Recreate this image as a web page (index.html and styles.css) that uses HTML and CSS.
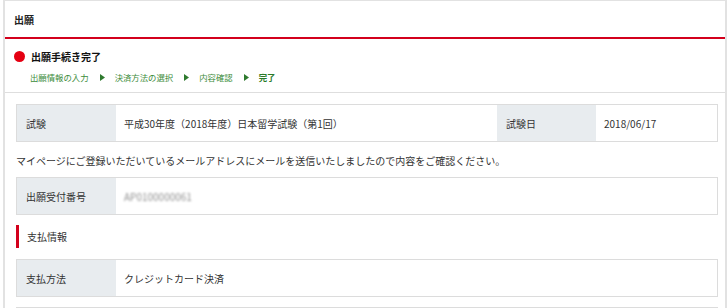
FILE: index.html
```html
<!DOCTYPE html>
<html lang="ja">
<head>
<meta charset="utf-8">
<title>出願</title>
<link rel="stylesheet" href="styles.css">
</head>
<body>
<div class="panel">
  <div class="panel-head">出願</div>
  <div class="status">
    <div class="status-title"><span class="dot"></span>出願手続き完了</div>
    <ol class="steps">
      <li>出願情報の入力</li>
      <li class="arrow"><svg width="5" height="7" viewBox="0 0 5 7"><path d="M0 0 L5 3.5 L0 7 Z" fill="#2f7a2f"/></svg></li>
      <li>決済方法の選択</li>
      <li class="arrow"><svg width="5" height="7" viewBox="0 0 5 7"><path d="M0 0 L5 3.5 L0 7 Z" fill="#2f7a2f"/></svg></li>
      <li>内容確認</li>
      <li class="arrow"><svg width="5" height="7" viewBox="0 0 5 7"><path d="M0 0 L5 3.5 L0 7 Z" fill="#2f7a2f"/></svg></li>
      <li class="current">完了</li>
    </ol>
  </div>
  <div class="content">
    <div class="info-table cols-4">
      <div class="cell label">試験</div>
      <div class="cell value">平成30年度（2018年度）日本留学試験（第1回）</div>
      <div class="cell label">試験日</div>
      <div class="cell value">2018/06/17</div>
    </div>
    <p class="notice">マイページにご登録いただいているメールアドレスにメールを送信いたしましたので内容をご確認ください。</p>
    <div class="info-table cols-2">
      <div class="cell label">出願受付番号</div>
      <div class="cell value"><span class="blurred">AP0100000061</span></div>
    </div>
    <h3 class="section-title">支払情報</h3>
    <div class="info-table cols-2">
      <div class="cell label">支払方法</div>
      <div class="cell value">クレジットカード決済</div>
    </div>
    <div class="info-table cols-2">
      <div class="cell label"></div>
      <div class="cell value"></div>
    </div>
  </div>
</div>
</body>
</html>
```

FILE: styles.css
```css
* { box-sizing: border-box; }
html, body {
  margin: 0;
  padding: 0;
  background: #fff;
}
body {
  font-family: "Noto Sans CJK JP", "Noto Sans", sans-serif;
  font-size: 10px;
  color: #333;
}
.panel {
  margin-left: 3px;
  width: 724px;
  border: 1px solid #e2e2e2;
  border-left-width: 2px;
  border-right-width: 2px;
  border-bottom: none;
}
.panel-head {
  height: 38px;
  padding-left: 9px;
  display: flex;
  align-items: center;
  font-weight: bold;
  font-size: 10px;
  color: #222;
  border-bottom: 2px solid #d3001c;
}
.status {
  padding: 10px 0 9px 9px;
  border-bottom: 1px solid #dedede;
}
.status-title {
  display: flex;
  align-items: center;
  height: 14px;
  font-weight: bold;
  font-size: 10px;
  color: #111;
}
.dot {
  width: 11px;
  height: 11px;
  border-radius: 50%;
  background: #e50012;
  margin-right: 6px;
}
.steps {
  list-style: none;
  margin: 8px 0 0 16px;
  padding: 0;
  display: flex;
  align-items: center;
  height: 12px;
  font-size: 8.4px;
  color: #3c8c3a;
}
.steps li { line-height: 12px; }
.steps .arrow {
  display: flex;
  align-items: center;
  margin: 0 10px 0 11px;
}
.steps .current {
  font-weight: bold;
  color: #2a7a28;
}
.content {
  padding: 11px 7px 0 11px;
}
.info-table {
  display: grid;
  border: 1px solid #dcdcdc;
}
.cols-4 { grid-template-columns: 99px 381px 99px 1fr; }
.cols-2 { grid-template-columns: 99px 1fr; }
.cell {
  height: 36px;
  display: flex;
  align-items: center;
}
.label {
  background: #e8ecef;
  padding-left: 9px;
}
.value {
  padding-left: 8px;
}
.blurred {
  color: #8f8f8f;
  filter: blur(1.1px);
}
.notice {
  margin: 12px 0 9px 0;
  line-height: 14px;
}
.section-title {
  margin: 10px 0 11px 0;
  height: 23px;
  border-left: 3px solid #d3001c;
  padding-left: 8px;
  display: flex;
  align-items: center;
  font-size: 10px;
  font-weight: normal;
  color: #333;
}
.info-table + .info-table {
  margin-top: 10px;
}
```
